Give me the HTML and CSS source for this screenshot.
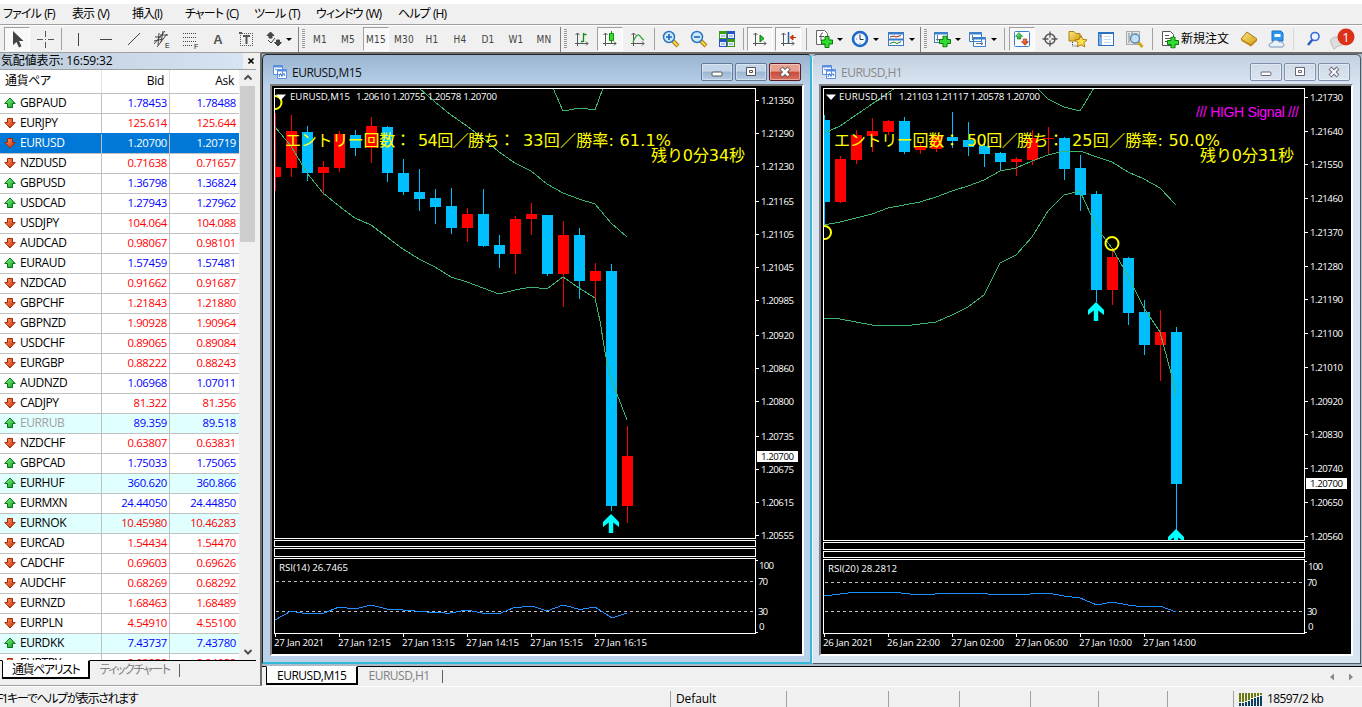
FILE: index.html
```html
<!DOCTYPE html>
<html lang="ja">
<head>
    <meta charset="UTF-8">
    <meta name="viewport" content="width=device-width, initial-scale=1.0">
    <title>EURUSD,M15</title>
    <link rel="stylesheet" href="styles.css">
</head>
<body>
    <!-- shared shapes -->
    <svg class="defs" width="0" height="0">
        <defs>
            <linearGradient id="g-up" x1="0" y1="0" x2="1" y2="1"><stop offset="0" stop-color="#8f8"/><stop offset="1" stop-color="#0a9a1a"/></linearGradient>
            <linearGradient id="g-down" x1="0" y1="0" x2="1" y2="1"><stop offset="0" stop-color="#ff9a6a"/><stop offset="1" stop-color="#c62800"/></linearGradient>
            <linearGradient id="g-gold" x1="0" y1="0" x2="1" y2="1"><stop offset="0" stop-color="#ffe680"/><stop offset="1" stop-color="#d09a10"/></linearGradient>
            <symbol id="up" viewBox="0 0 12 12"><path d="M6 1L11.200 6.500H8.500V10.500H3.500V6.500H.8Z" fill="url(#g-up)" stroke="#087018"/></symbol>
            <symbol id="down" viewBox="0 0 12 12"><path d="M6 11L11.200 5.500H8.500V1.500H3.500V5.500H.8Z" fill="url(#g-down)" stroke="#a02808"/></symbol>
            <symbol id="plus" viewBox="0 0 12 12"><path d="M4 .5H8V4H11.5V8H8V11.5H4V8H.5V4H4Z" fill="#2fdc2f" stroke="#087808"/></symbol>
            <symbol id="axes" viewBox="0 0 16 16"><path d="M3.500 2V15M1 12.500H14M1.500 4L3.500 2L5.500 4M12 10.500L14 12.500L12 14.500" fill="none" stroke="#555"/></symbol>
            <symbol id="child" viewBox="0 0 14 14"><path d="M.5 .5H9.500V9.500H.5ZM4.500 4.500H13.500V13.500H4.500Z" fill="#fff" stroke="#5b8de0"/><path d="M.5 1.500H9.500M4.500 5.500H13.500" stroke="#5b8de0" stroke-width="2"/><path d="M2 4L4 5M6 12L7.500 8.500L9 11.500L11 8.500L12 11" fill="none" stroke="#4b7fd8"/></symbol>
            <symbol id="arrow" viewBox="0 0 16 19"><path d="M8 0L16 8V13L10.200 8.500V19H5.800V8.500L0 13V8Z" fill="#0ff"/></symbol>
        </defs>
    </svg>

    <div class="app">
        <nav class="menu">
            <span>ファイル (F)</span>
            <span>表示 (V)</span>
            <span>挿入(I)</span>
            <span>チャート (C)</span>
            <span>ツール (T)</span>
            <span>ウィンドウ (W)</span>
            <span>ヘルプ (H)</span>
        </nav>

        <div class="toolbar">
            <div class="edge"></div>
            <div class="tool on"><svg width="16" height="20"><path d="M4 2V16L7.500 13L10 18.500L12.500 17.300L10 12H14.500Z" fill="#444"/></svg></div>
            <div class="tool"><svg width="18" height="18"><path d="M9.500 1V7M9.500 12V18M1 9.500H7M12 9.500H18M9.500 9V10" stroke="#555"/></svg></div>
            <div class="sep"></div>
            <div class="tool"><svg width="18" height="18"><path d="M9.500 3V16" stroke="#444"/></svg></div>
            <div class="tool"><svg width="18" height="18"><path d="M3 9.500H15" stroke="#444"/></svg></div>
            <div class="tool"><svg width="18" height="18"><path d="M3 15L15 3" stroke="#444"/></svg></div>
            <div class="tool"><svg width="18" height="20"><path d="M1 15L12 2M4 18L14 5M2 8L8 8M1 12L10 10M6 4L5 16M10 2L8 13M7 6H15" stroke="#444" fill="none"/><text x="12" y="19" class="tiny">E</text></svg></div>
            <div class="tool"><svg width="19" height="20"><path d="M2 4.500H16M2 8.500H16M2 12.500H16M2 16.500H11" stroke="#444" stroke-dasharray="1 1" shape-rendering="crispEdges"/><text x="13" y="20" class="tiny">F</text></svg></div>
            <div class="tool"><b>A</b></div>
            <div class="tool"><svg width="16" height="18"><path d="M2 3.500H15M2 15.500H15M2.500 3V16M14.500 3V16" stroke="#555" stroke-dasharray="1 1" shape-rendering="crispEdges"/><path d="M1 2H4V4H1Z" fill="#555"/><path d="M5 6H12M8.500 5.500V14" stroke="#555" stroke-width="2"/></svg></div>
            <div class="tool"><svg width="18" height="18"><path d="M5.500 2L9 5.500L7 5.500V8H4V5.500L2 5.500ZM13 16L9.500 12.500L11.500 12.500V10H14.500V12.500H16.500Z" fill="#444" stroke="#444"/><path d="M3 10L6 13L10 8" fill="none" stroke="#444"/></svg></div>
            <i class="caret first"></i>

            <div class="grip"></div>
            <div class="tool tf">M1</div>
            <div class="tool tf">M5</div>
            <div class="tool tf on">M15</div>
            <div class="tool tf">M30</div>
            <div class="tool tf">H1</div>
            <div class="tool tf">H4</div>
            <div class="tool tf">D1</div>
            <div class="tool tf">W1</div>
            <div class="tool tf">MN</div>

            <div class="grip"></div>
            <div class="tool"><svg width="16" height="16"><use href="#axes"/><path d="M9.500 2V11M7 10.500H9M10 3.500H12.500" stroke="#149014" stroke-width="1.300"/></svg></div>
            <div class="tool on"><svg width="16" height="16"><use href="#axes"/><path d="M9.500 0V12" stroke="#149014"/><path d="M7.500 2.500H11.500V9.500H7.500Z" fill="#3d3" stroke="#149014"/></svg></div>
            <div class="tool"><svg width="16" height="16"><use href="#axes"/><path d="M3 11Q7 1 10 5T14 9" fill="none" stroke="#38a838" stroke-width="1.300"/></svg></div>
            <div class="sep"></div>
            <div class="tool"><svg width="18" height="18"><path d="M11 11L16 16" stroke="#a87a10" stroke-width="4"/><path d="M11 11L15.500 15.500" stroke="#ffd84a" stroke-width="2"/><circle cx="7" cy="7" r="5.500" fill="#cfe8fb" stroke="#2a78c0" stroke-width="1.500"/><path d="M4 7H10M7 4V10" stroke="#1a68b8" stroke-width="1.600"/></svg></div>
            <div class="tool"><svg width="18" height="18"><path d="M11 11L16 16" stroke="#a87a10" stroke-width="4"/><path d="M11 11L15.500 15.500" stroke="#ffd84a" stroke-width="2"/><circle cx="7" cy="7" r="5.500" fill="#cfe8fb" stroke="#2a78c0" stroke-width="1.500"/><path d="M4 7H10" stroke="#1a68b8" stroke-width="1.600"/></svg></div>
            <div class="tool"><svg width="16" height="16"><path d="M0 0H8V8H0ZM8 8H16V16H8Z" fill="#3a9a10"/><path d="M8 0H16V8H8ZM0 8H8V16H0Z" fill="#2850c8"/><path d="M1 3H7V7H1ZM9 3H15V7H9ZM1 11H7V15H1ZM9 11H15V15H9Z" fill="#e8f0ff"/><path d="M2 5H6M10 5H14M2 13H6M10 13H14" stroke="#7a9ac0"/></svg></div>
            <div class="sep"></div>
            <div class="tool on"><svg width="16" height="16"><use href="#axes"/><path d="M8 4L12 7.500L8 11Z" fill="#2c2" stroke="#087808"/></svg></div>
            <div class="tool on"><svg width="16" height="16"><use href="#axes"/><path d="M8.500 1V12" stroke="#2060a0" stroke-width="1.500"/><path d="M10 6.500L13 4V9ZM12 6.500H16" fill="#e04010" stroke="#c03000"/></svg></div>
            <div class="sep wide"></div>
            <div class="tool drop"><svg width="18" height="18"><path d="M1.500 .5H9.500L12.500 3.500V14.500H1.500Z" fill="#fff" stroke="#666"/><path d="M8 3C5 3 6 6 6 11M4 6.500H9" fill="none" stroke="#555"/><use href="#plus" x="6" y="6" width="12" height="12"/></svg><i class="caret"></i></div>
            <div class="tool drop"><svg width="18" height="18"><circle cx="9" cy="9" r="7" fill="#eef6ff" stroke="#1d68c8" stroke-width="2.600"/><path d="M9 4.500V9.500H12.500" fill="none" stroke="#333"/><path d="M5 9H6M9 13V14" stroke="#789"/></svg><i class="caret"></i></div>
            <div class="tool drop"><svg width="18" height="16"><rect x="1.500" y="1.500" width="15" height="13" fill="#fff" stroke="#3a7ac8"/><path d="M1 2.500H17M1 8.500H17" stroke="#3a7ac8" stroke-width="2"/><path d="M3 6L7 5L9 6L14 4.500" fill="none" stroke="#a02010"/><path d="M3 12.500L7 11L10 12.500L14 10.500" fill="none" stroke="#188018"/></svg><i class="caret"></i></div>

            <div class="grip"></div>
            <div class="tool drop"><svg width="18" height="17"><rect x="1.500" y="1.500" width="13" height="10" fill="#fff" stroke="#3a80c8"/><path d="M1 2.500H15" stroke="#3a80c8" stroke-width="2"/><path d="M4.500 4V10M3 8.500H9" stroke="#678"/><use href="#plus" x="6" y="4.500" width="12" height="12"/></svg><i class="caret"></i></div>
            <div class="tool drop"><svg width="18" height="17"><path d="M.5 1.500H12.500V10.500H.5ZM4.500 6.500H16.500V15.500H4.500Z" fill="#fff" stroke="#3a80c8"/><path d="M0 2.500H13M4 7.500H17" stroke="#3a80c8" stroke-width="2"/><path d="M3.500 4V9M7 12.500H14M12 11L14 12.500L12 14" fill="none" stroke="#678"/></svg><i class="caret"></i></div>
            <div class="sep wide"></div>
            <div class="tool on"><svg width="16" height="16"><rect x=".5" y=".5" width="15" height="15" rx="1" fill="#fff" stroke="#3a80d0"/><use href="#up" x="1" y="1" width="8" height="8"/><use href="#down" x="7" y="7" width="8" height="8"/></svg></div>
            <div class="tool"><svg width="18" height="18"><circle cx="9" cy="9" r="5" fill="none" stroke="#555" stroke-width="1.500"/><path d="M9 1.500V7.500M9 10.500V16.500M1.500 9H7.500M10.500 9H16.500" stroke="#555" stroke-width="1.300"/></svg></div>
            <div class="tool"><svg width="20" height="18"><path d="M1 1.500H6L8 3.500H12V11H1Z" fill="url(#g-gold)" stroke="#a88410"/><path d="M4.500 12V16H10" fill="none" stroke="#444" stroke-dasharray="1 1"/><path d="M13 5.500L14.800 9.400L19 9.900L15.900 12.700L16.700 16.900L13 14.800L9.300 16.900L10.100 12.700L7 9.900L11.200 9.400Z" fill="#ffe24a" stroke="#b07a10"/></svg></div>
            <div class="tool"><svg width="16" height="16"><rect x=".5" y="1.500" width="15" height="13" fill="#fff" stroke="#2a72c0"/><path d="M0 2H16" stroke="#2a72c0" stroke-width="2"/><path d="M1 3H4V14H1Z" fill="#7ab0e8"/><path d="M6 5.500H13M6 8.500H13M6 11.500H13" stroke="#c8d8f0"/><path d="M2 5H3" stroke="#d00"/></svg></div>
            <div class="tool"><svg width="19" height="18"><rect x="1.500" y="1.500" width="13" height="13" fill="#e8e8e0" stroke="#aaa"/><path d="M4 3V13M7 2V10M11 3V9" stroke="#789"/><path d="M13 12L17.500 17" stroke="#d8a818" stroke-width="3"/><circle cx="10" cy="8.500" r="4.500" fill="#bfe0f8" fill-opacity=".8" stroke="#5088b8" stroke-width="1.300"/></svg></div>
            <div class="sep wide"></div>
            <div class="tool order"><svg width="18" height="19"><path d="M1.500 1.500H9.500L12.500 4.500V15.500H1.500Z" fill="#fff" stroke="#555"/><path d="M4 5.500H8M4 8.500H10M4 11.500H8" stroke="#555"/><use href="#plus" x="6" y="6.500" width="12" height="12"/></svg><span>新規注文</span></div>
            <div class="tool"><svg width="18" height="16"><path d="M1 8L7 1L17 8L11 15Z" fill="url(#g-gold)" stroke="#a87818"/><path d="M1 8L1.500 10L11 15.500L17 10V8L11 13Z" fill="#c08a18"/></svg></div>
            <div class="tool"><svg width="18" height="18"><path d="M4 1H13L15 3V11H4Z" fill="#2a98f0" stroke="#1a70c8"/><path d="M6.500 4H12.500V7H6.500Z" fill="#fff"/><path d="M3 17C0 17 .5 12.500 4 13C5 9.500 10 9.500 11 12C15 10.500 18 16.500 14 17Z" fill="#e8f0fa" stroke="#7a90b8"/></svg></div>
            <div class="sep faint"></div>
            <div class="tool"><svg width="16" height="16"><path d="M2 14L6.500 8.500" stroke="#2a5ac0" stroke-width="2.500"/><circle cx="9" cy="5.500" r="4" fill="#eef4ff" stroke="#3a68d8" stroke-width="1.600"/></svg></div>
            <div class="tool bubble"><svg width="26" height="22"><path d="M3 17C-1 12 4 8 10 9C17 10 16 18 9 18L5 21Z" fill="#ddd" stroke="#bbb"/><circle cx="17" cy="9" r="8.500" fill="#dc3018"/><text x="17" y="13.500">1</text></svg></div>
        </div>

        <div class="main">
            <aside class="watch">
                <div class="watch-title"><span>気配値表示: 16:59:32</span><svg width="8" height="8"><path d="M1.500 1.500L6.500 6.500M6.500 1.500L1.500 6.500" stroke="#000" stroke-width="1.700"/></svg></div>
                <div class="watch-body">
                    <div class="list">
                        <div class="row head"><span>通貨ペア</span><span>Bid</span><span>Ask</span></div>
                        <div class="row rise"><span><svg><use href="#up"/></svg>GBPAUD</span><span>1.78453</span><span>1.78488</span></div>
                        <div class="row"><span><svg><use href="#down"/></svg>EURJPY</span><span>125.614</span><span>125.644</span></div>
                        <div class="row selected"><span><svg><use href="#down"/></svg>EURUSD</span><span>1.20700</span><span>1.20719</span></div>
                        <div class="row"><span><svg><use href="#down"/></svg>NZDUSD</span><span>0.71638</span><span>0.71657</span></div>
                        <div class="row rise"><span><svg><use href="#up"/></svg>GBPUSD</span><span>1.36798</span><span>1.36824</span></div>
                        <div class="row rise"><span><svg><use href="#up"/></svg>USDCAD</span><span>1.27943</span><span>1.27962</span></div>
                        <div class="row"><span><svg><use href="#down"/></svg>USDJPY</span><span>104.064</span><span>104.088</span></div>
                        <div class="row"><span><svg><use href="#down"/></svg>AUDCAD</span><span>0.98067</span><span>0.98101</span></div>
                        <div class="row rise"><span><svg><use href="#up"/></svg>EURAUD</span><span>1.57459</span><span>1.57481</span></div>
                        <div class="row"><span><svg><use href="#down"/></svg>NZDCAD</span><span>0.91662</span><span>0.91687</span></div>
                        <div class="row"><span><svg><use href="#down"/></svg>GBPCHF</span><span>1.21843</span><span>1.21880</span></div>
                        <div class="row"><span><svg><use href="#down"/></svg>GBPNZD</span><span>1.90928</span><span>1.90964</span></div>
                        <div class="row"><span><svg><use href="#down"/></svg>USDCHF</span><span>0.89065</span><span>0.89084</span></div>
                        <div class="row"><span><svg><use href="#down"/></svg>EURGBP</span><span>0.88222</span><span>0.88243</span></div>
                        <div class="row rise"><span><svg><use href="#up"/></svg>AUDNZD</span><span>1.06968</span><span>1.07011</span></div>
                        <div class="row"><span><svg><use href="#down"/></svg>CADJPY</span><span>81.322</span><span>81.356</span></div>
                        <div class="row rise tint off"><span><svg><use href="#up"/></svg>EURRUB</span><span>89.359</span><span>89.518</span></div>
                        <div class="row"><span><svg><use href="#down"/></svg>NZDCHF</span><span>0.63807</span><span>0.63831</span></div>
                        <div class="row rise"><span><svg><use href="#up"/></svg>GBPCAD</span><span>1.75033</span><span>1.75065</span></div>
                        <div class="row rise tint"><span><svg><use href="#up"/></svg>EURHUF</span><span>360.620</span><span>360.866</span></div>
                        <div class="row rise"><span><svg><use href="#up"/></svg>EURMXN</span><span>24.44050</span><span>24.44850</span></div>
                        <div class="row tint"><span><svg><use href="#down"/></svg>EURNOK</span><span>10.45980</span><span>10.46283</span></div>
                        <div class="row"><span><svg><use href="#down"/></svg>EURCAD</span><span>1.54434</span><span>1.54470</span></div>
                        <div class="row"><span><svg><use href="#down"/></svg>CADCHF</span><span>0.69603</span><span>0.69626</span></div>
                        <div class="row"><span><svg><use href="#down"/></svg>AUDCHF</span><span>0.68269</span><span>0.68292</span></div>
                        <div class="row"><span><svg><use href="#down"/></svg>EURNZD</span><span>1.68463</span><span>1.68489</span></div>
                        <div class="row"><span><svg><use href="#down"/></svg>EURPLN</span><span>4.54910</span><span>4.55100</span></div>
                        <div class="row rise tint"><span><svg><use href="#up"/></svg>EURDKK</span><span>7.43737</span><span>7.43780</span></div>
                        <div class="row"><span><svg><use href="#down"/></svg>EURTRY</span><span>8.93258</span><span>8.94058</span></div>
                    </div>
                    <div class="scroll">
                        <svg width="16" height="16"><path d="M4.500 9.500L8 6L11.500 9.500" fill="none" stroke="#505050" stroke-width="2"/></svg>
                        <div class="thumb"></div>
                        <svg width="16" height="16"><path d="M4.500 6L8 9.500L11.500 6" fill="none" stroke="#505050" stroke-width="2"/></svg>
                    </div>
                </div>
                <div class="tabs small">
                    <span class="tab active">通貨ペアリスト</span>
                    <span class="tab">ティックチャート</span>
                </div>
            </aside>

            <section class="work">
                <div class="windows">
                    <article class="window active">
                        <header>
                            <svg width="14" height="14"><use href="#child"/></svg>
                            <h2>EURUSD,M15</h2>
                            <button><svg width="12" height="12"><rect x="1" y="6" width="10" height="4" rx="1" fill="#fff" stroke="#555"/></svg></button>
                            <button><svg width="12" height="12"><path d="M1.500 1.500H10.500V9.500H1.500ZM4.500 4.500H7.500V6.500H4.500Z" fill="#fff" stroke="#555"/></svg></button>
                            <button class="close"><svg width="12" height="12"><path d="M2 2L10 10M10 2L2 10" stroke="#555" stroke-width="4.500"/><path d="M2.500 2.500L9.500 9.500M9.500 2.500L2.500 9.500" stroke="#fff" stroke-width="2.600"/></svg></button>
                        </header>
                        <svg class="chart" viewBox="272 86 530 568">
                            <defs><clipPath id="plot1"><rect x="275" y="89" width="480" height="449"/></clipPath></defs>
                            <g class="frame">
                                <path d="M274.500 88.500H755.500V538.500H274.500ZM274.500 540.500H755.500V546.500H274.500ZM274.500 548.500H755.500V556.500H274.500ZM274.500 558.500H755.500V633.500H274.500Z"/>
                                <path d="M756 100.500h3M756 133.500h3M756 166.500h3M756 201.500h3M756 234.500h3M756 267.500h3M756 300.500h3M756 335.500h3M756 368.500h3M756 401.500h3M756 436.500h3M756 469.500h3M756 502.500h3M756 535.500h3M756 560.500h2M756 632.500h2"/>
                                <path d="M275.500 634v3M339.500 634v3M403.500 634v3M467.500 634v3M531.500 634v3M595.500 634v3"/>
                            </g>
                            <g clip-path="url(#plot1)">
                                <path class="wick bull" d="M275.500 113V191M291.500 115V177M323.500 161V195M339.500 131V172M371.500 117V163M467.500 208V242M515.500 216V274M531.500 203V235M563.500 221V307M595.500 263V302M627.500 426V523"/>
                                <path class="body bull" d="M275.500 167V177M291.500 131V168M323.500 167V173M339.500 134V168M371.500 126V148M467.500 214V228M515.500 219V254M531.500 214V219M563.500 235V274M595.500 271V281M627.500 456V506"/>
                                <path class="wick bear" d="M307.500 126V181M355.500 130V156M387.500 126V182M403.500 159V195M419.500 169V211M435.500 189V224M451.500 188V234M483.500 189V247M499.500 235V268M547.500 215V276M579.500 228V299M611.500 264V511"/>
                                <path class="body bear" d="M307.500 132V173M355.500 135V148M387.500 127V173M403.500 173V192M419.500 192V199M435.500 198V207M451.500 206V228M483.500 214V246M499.500 245V254M547.500 215V274M579.500 235V281M611.500 271V506"/>
                                <polyline class="band" points="419,88 435,102 451,115 467,126 483,138 499,152 515,163 531,171 547,184 563,193 579,199 595,204 611,223 627,237"/>
                                <polyline class="band" points="553,88 563,111 580,108 595,110 603,88"/>
                                <polyline class="band" points="275,127 291,146 307,173 323,193 339,206 355,218 371,225 387,237 403,249 419,259 435,267 451,277 467,282 483,288 499,294 515,290 531,287 547,289 563,277 579,288 595,298 600,321 605,352 611,379 617,394 627,420"/>
                                <circle class="mark" cx="275" cy="102.500" r="6.500"/>
                                <use href="#arrow" x="603" y="514" width="16" height="19"/>
                            </g>
                            <path class="level" d="M276 581.500H755M276 611.500H755"/>
                            <polyline class="rsi" points="275,620 291,611 307,614 324,613 339,607 355,609 371,605 387,609 403,610 427,612 445,613 450,613 467,610 482,613 501,613 513,608 532,606 547,611 563,605 580,609.500 595,607 612,618 627,613"/>
                            <path d="M276 94.500H286L281 100Z" fill="#fff"/>
                            <g class="label">
                                <text x="290" y="100" textLength="60">EURUSD,M15</text>
                                <text x="356" y="100" textLength="141">1.20610 1.20755 1.20578 1.20700</text>
                                <text x="279" y="571" textLength="69">RSI(14) 26.7465</text>
                                <text x="761" y="104" textLength="33">1.21350</text>
                                <text x="761" y="137" textLength="33">1.21290</text>
                                <text x="761" y="170" textLength="33">1.21230</text>
                                <text x="761" y="205" textLength="33">1.21165</text>
                                <text x="761" y="238" textLength="33">1.21105</text>
                                <text x="761" y="271" textLength="33">1.21045</text>
                                <text x="761" y="304" textLength="33">1.20985</text>
                                <text x="761" y="339" textLength="33">1.20920</text>
                                <text x="761" y="372" textLength="33">1.20860</text>
                                <text x="761" y="405" textLength="33">1.20800</text>
                                <text x="761" y="440" textLength="33">1.20735</text>
                                <text x="761" y="473" textLength="33">1.20675</text>
                                <text x="761" y="506" textLength="33">1.20615</text>
                                <text x="761" y="539" textLength="33">1.20555</text>
                                <rect x="757" y="451" width="41" height="11"/>
                                <text class="price" x="761" y="460" textLength="33">1.20700</text>
                                <text x="759" y="569" textLength="15">100</text>
                                <text x="758" y="585" textLength="10">70</text>
                                <text x="758" y="615" textLength="10">30</text>
                                <text x="759" y="630">0</text>
                                <text x="274" y="646" textLength="50">27 Jan 2021</text>
                                <text x="338" y="646" textLength="53">27 Jan 12:15</text>
                                <text x="402" y="646" textLength="53">27 Jan 13:15</text>
                                <text x="466" y="646" textLength="53">27 Jan 14:15</text>
                                <text x="530" y="646" textLength="53">27 Jan 15:15</text>
                                <text x="594" y="646" textLength="53">27 Jan 16:15</text>
                            </g>
                            <g class="stats">
                                <text x="285" y="146" textLength="126">エントリー回数：</text>
                                <text x="418" y="146" textLength="97">54回／勝ち：</text>
                                <text x="523" y="146" textLength="148">33回／勝率: 61.1%</text>
                                <text x="651" y="161" textLength="94">残り0分34秒</text>
                            </g>
                        </svg>
                    </article>

                    <article class="window">
                        <header>
                            <svg width="14" height="14"><use href="#child"/></svg>
                            <h2>EURUSD,H1</h2>
                            <button><svg width="12" height="12"><rect x="1" y="6" width="10" height="3.500" rx="1" fill="#fff" stroke="#667"/></svg></button>
                            <button><svg width="12" height="12"><path d="M1.500 1.500H10.500V9.500H1.500ZM4.500 4.500H7.500V6.500H4.500Z" fill="#fff" stroke="#667"/></svg></button>
                            <button><svg width="12" height="12"><path d="M2 2L10 10M10 2L2 10" stroke="#667" stroke-width="4"/><path d="M2.500 2.500L9.500 9.500M9.500 2.500L2.500 9.500" stroke="#fff" stroke-width="2"/></svg></button>
                        </header>
                        <svg class="chart" viewBox="821 86 530 568">
                            <defs><clipPath id="plot2"><rect x="824" y="89" width="480" height="451"/></clipPath></defs>
                            <g class="frame">
                                <path d="M823.500 88.500H1304.500V540.500H823.500ZM823.500 542.500H1304.500V549.500H823.500ZM823.500 551.500H1304.500V557.500H823.500ZM823.500 559.500H1304.500V633.500H823.500Z"/>
                                <path d="M1305 97.500h3M1305 131.500h3M1305 164.500h3M1305 198.500h3M1305 232.500h3M1305 266.500h3M1305 299.500h3M1305 333.500h3M1305 367.500h3M1305 401.500h3M1305 434.500h3M1305 468.500h3M1305 502.500h3M1305 536.500h3M1305 561.500h2M1305 632.500h2"/>
                                <path d="M824.500 634v3M888.500 634v3M952.500 634v3M1016.500 634v3M1080.500 634v3M1144.500 634v3"/>
                            </g>
                            <g clip-path="url(#plot2)">
                                <path class="wick bull" d="M840.500 156V203M856.500 130V164M872.500 118V152M888.500 120V135M920.500 142V154M936.500 135V152M1016.500 157V176M1032.500 130V165M1048.500 127V155M1112.500 250V305M1160.500 310V381"/>
                                <path class="body bull" d="M840.500 159V202M856.500 135V160M872.500 131V136M888.500 121V132M920.500 147V150M936.500 136V149M1016.500 159V162M1032.500 138V160M1048.500 138V139M1112.500 257V290M1160.500 332V345"/>
                                <path class="wick bear" d="M824.500 115V225M904.500 117V154M952.500 112V148M968.500 122V156M984.500 141V167M1000.500 152V170M1064.500 137V180M1080.500 155V211M1096.500 191V302M1128.500 257V325M1144.500 300V355M1176.500 327V530"/>
                                <path class="body bear" d="M824.500 120V202M904.500 121V152M952.500 137V141M968.500 140V147M984.500 146V154M1000.500 153V162M1064.500 138V169M1080.500 168V195M1096.500 194V290M1128.500 258V313M1144.500 312V345M1176.500 332V484"/>
                                <polyline class="band" points="824,133 840,126 856,115 878,100 895,88"/>
                                <polyline class="band" points="1037,88 1048,99 1064,107 1080,111 1094,88"/>
                                <polyline class="band" points="824,225 840,222 856,218 872,214 888,208 920,202 936,197 952,191 968,186 984,180 1000,171 1016,168 1032,161 1048,155 1064,151 1080,151 1097,157 1112,162 1128,172 1144,179 1160,188 1176,205"/>
                                <polyline class="band" points="824,318 840,319 872,325 912,325 936,322 952,315 968,307 984,295 1000,263 1016,255 1032,237 1048,211 1064,195 1080,191 1097,228 1112,248 1128,276 1144,308 1160,332 1171,373 1176,395"/>
                                <circle class="mark" cx="824.500" cy="232.500" r="6.500"/>
                                <circle class="mark" cx="1112" cy="243.500" r="6.500"/>
                                <use href="#arrow" x="1088" y="302" width="16" height="19"/>
                                <use href="#arrow" x="1168" y="529" width="16" height="19"/>
                            </g>
                            <path class="level" d="M825 582.500H1304M825 611.500H1304"/>
                            <polyline class="rsi" points="824,596 848,593 864,592 892,592 910,594 935,594 965,593 1010,595 1030,594 1048,593 1064,596 1080,598 1097,605 1112,602 1128,605 1144,607 1160,606 1176,612"/>
                            <path d="M826 94.500H836L831 100Z" fill="#fff"/>
                            <g class="label">
                                <text x="839" y="100" textLength="54">EURUSD,H1</text>
                                <text x="899" y="100" textLength="141">1.21103 1.21117 1.20578 1.20700</text>
                                <text x="828" y="572" textLength="69">RSI(20) 28.2812</text>
                                <text x="1310" y="101" textLength="33">1.21730</text>
                                <text x="1310" y="135" textLength="33">1.21640</text>
                                <text x="1310" y="168" textLength="33">1.21550</text>
                                <text x="1310" y="202" textLength="33">1.21460</text>
                                <text x="1310" y="236" textLength="33">1.21370</text>
                                <text x="1310" y="270" textLength="33">1.21280</text>
                                <text x="1310" y="303" textLength="33">1.21190</text>
                                <text x="1310" y="337" textLength="33">1.21100</text>
                                <text x="1310" y="371" textLength="33">1.21010</text>
                                <text x="1310" y="405" textLength="33">1.20920</text>
                                <text x="1310" y="438" textLength="33">1.20830</text>
                                <text x="1310" y="472" textLength="33">1.20740</text>
                                <text x="1310" y="506" textLength="33">1.20650</text>
                                <text x="1310" y="540" textLength="33">1.20560</text>
                                <rect x="1306" y="478" width="41" height="11"/>
                                <text class="price" x="1310" y="487" textLength="33">1.20700</text>
                                <text x="1308" y="570" textLength="15">100</text>
                                <text x="1307" y="586" textLength="10">70</text>
                                <text x="1307" y="615" textLength="10">30</text>
                                <text x="1308" y="630">0</text>
                                <text x="823" y="646" textLength="50">26 Jan 2021</text>
                                <text x="887" y="646" textLength="53">26 Jan 22:00</text>
                                <text x="951" y="646" textLength="53">27 Jan 02:00</text>
                                <text x="1015" y="646" textLength="53">27 Jan 06:00</text>
                                <text x="1079" y="646" textLength="53">27 Jan 10:00</text>
                                <text x="1143" y="646" textLength="53">27 Jan 14:00</text>
                            </g>
                            <g class="stats">
                                <text x="834" y="146" textLength="126">エントリー回数：</text>
                                <text x="967" y="146" textLength="97">50回／勝ち：</text>
                                <text x="1072" y="146" textLength="148">25回／勝率: 50.0%</text>
                                <text x="1200" y="161" textLength="94">残り0分31秒</text>
                            </g>
                            <text class="signal" x="1196" y="117" textLength="103">/// HIGH Signal ///</text>
                        </svg>
                    </article>
                </div>
                <div class="tabs">
                    <span class="tab active">EURUSD,M15</span>
                    <span class="tab">EURUSD,H1</span>
                    <svg class="pager" width="30" height="10"><path d="M7 1.500V8.500L3 5ZM22 1.500V8.500L26 5Z" fill="#888"/></svg>
                </div>
            </section>
        </div>

        <footer class="status">
            <span class="hint">F1キーでヘルプが表示されます</span>
            <span>Default</span>
            <span></span>
            <span></span>
            <span></span>
            <span></span>
            <span></span>
            <span></span>
            <span class="net"><svg width="23" height="13"><path d="M1 0V9M4 0V9M7 0V8M10 0V7M13 0V5M16 0V4M19 0V3M22 0V2" stroke="#6b7a10" stroke-width="2"/><path d="M1 10V13M4 10V13M7 9V13M10 8V13M13 6V13M16 5V13M19 4V13M22 3V13" stroke="#0c3f5c" stroke-width="2"/></svg>18597/2 kb</span>
        </footer>
    </div>
</body>
</html>
```
FILE: styles.css
```css
* {
    margin: 0;
    padding: 0;
    box-sizing: border-box;
}

body {
    width: 1362px;
    height: 707px;
    overflow: hidden;
    background: #f0f0f0;
    font-family: "Open Sans", "Noto Sans CJK JP", sans-serif;
    font-size: 12px;
    color: #000;
}

svg {
    display: block;
    flex: none;
}

.defs {
    position: absolute;
}

.app {
    display: flex;
    flex-direction: column;
    height: 707px;
}

/* menu */
.menu {
    display: grid;
    grid-template-columns: 69px 60px 53px 69px 62px 82px 60px;
    height: 25px;
    padding-left: 3px;
    border-top: 4px solid #fff;
    border-bottom: 1px solid #a0a0a0;
    line-height: 19px;
    white-space: nowrap;
    font-feature-settings: "palt";
    letter-spacing: -0.9px;
    word-spacing: 1px;
}

/* toolbar */
.toolbar {
    display: flex;
    align-items: center;
    height: 27px;
    border-top: 1px solid #fff;
}

.edge {
    width: 3px;
}

.tool {
    display: flex;
    align-items: center;
    justify-content: center;
    flex: none;
    width: 28px;
    height: 24px;
    color: #555;
    font-family: "Liberation Sans", sans-serif;
    font-size: 13px;
}

.tool.on {
    width: 26px;
    margin: 0 1px;
    background: #f8f8f8;
    border: 1px solid #a0a0a0;
    border-right-color: #fff;
    border-bottom-color: #fff;
}

.tool.tf {
    color: #444;
    font-family: "DejaVu Sans Condensed", "DejaVu Sans", sans-serif;
    font-size: 10px;
    letter-spacing: 0.2px;
}

.tool .tiny {
    font-size: 7px;
    fill: #222;
}

.tool.drop {
    width: 36px;
    justify-content: flex-start;
    padding-left: 5px;
    gap: 4px;
}

.tool.order {
    width: 79px;
    justify-content: flex-start;
    padding-left: 5px;
    gap: 2px;
    color: #000;
    font-family: "Noto Sans CJK JP", sans-serif;
    font-size: 12px;
    line-height: 18px;
    white-space: nowrap;
}

.tool.order span {
    margin-top: -3px;
}

.tool.bubble text {
    font-family: "Open Sans", sans-serif;
    font-size: 13px;
    fill: #fff;
    text-anchor: middle;
}

.caret {
    flex: none;
    width: 0;
    border: 3px solid transparent;
    border-top-color: #000;
    border-bottom: 0;
}

.caret.first {
    margin: 0 4px 0 -2px;
}

.sep {
    flex: none;
    width: 5px;
    height: 22px;
    background: linear-gradient(#a0a0a0, #a0a0a0) 2px 0 / 1px 100% no-repeat;
}

.sep.wide {
    width: 8px;
    background-position: 4px 0;
}

.sep.faint {
    width: 9px;
    opacity: 0.3;
}

.grip {
    flex: none;
    width: 10px;
    height: 25px;
    background:
        linear-gradient(#808080, #808080) 2px 0 / 1px 100% no-repeat,
        repeating-linear-gradient(#999 0 1px, #f0f0f0 1px 2px) 6px 2px / 3px 20px no-repeat;
}

/* main area */
.main {
    display: flex;
    height: 634px;
}

.watch {
    display: flex;
    flex-direction: column;
    width: 262px;
    border-top: 1px solid #a0a0a0;
    border-right: 2px solid #6e6e6e;
    border-bottom: 1px solid #a0a0a0;
}

.watch-title {
    display: flex;
    align-items: center;
    justify-content: space-between;
    width: 258px;
    height: 16px;
    padding: 0 3px 0 1px;
    background: linear-gradient(90deg, #bccbdb, #d7e4f2 243px, #f0f0f0 243px);
    font-size: 12px;
    line-height: 15px;
    white-space: nowrap;
    letter-spacing: -0.15px;
}

.watch-title span {
    margin-top: -2px;
}

.watch-body {
    display: flex;
    width: 256px;
    height: 591px;
    border-top: 1px solid #a0a0a0;
}

.list {
    width: 239px;
    overflow: hidden;
    background: #fff;
}

.row {
    display: grid;
    grid-template-columns: 102px 68px 69px;
    height: 20px;
    border-bottom: 1px solid #c0c0c0;
    color: #f00;
    line-height: 17px;
}

.row span {
    padding-right: 2px;
    border-right: 1px solid #c0c0c0;
    text-align: right;
    font-size: 11.3px;
    letter-spacing: -0.3px;
}

.row span:last-child {
    padding-right: 3px;
    border-right: 0;
}

.row span:first-child {
    display: flex;
    gap: 4px;
    padding-left: 4px;
    color: #000;
    font-size: 12px;
    letter-spacing: -0.4px;
}

.row svg {
    width: 12px;
    height: 12px;
    margin-top: 3px;
}

.row.rise {
    color: #00f;
}

.row.tint {
    background: #e0ffff;
}

.row.off span:first-child {
    color: #a0a0a0;
}

.row.selected,
.row.selected span:first-child {
    background: #0078d7;
    color: #fff;
}

.row.selected {
    box-shadow: 0 -1px #0078d7;
}

.row.head {
    height: 24px;
    color: #000;
    line-height: 22px;
}

.row.head span {
    padding: 0 5px;
    border-color: #e0e0e0;
    font-size: 12px;
    font-feature-settings: "palt";
}

.scroll {
    display: flex;
    flex-direction: column;
    width: 17px;
    padding-left: 1px;
    background: #f0f0f0;
}

.thumb {
    width: 15px;
    height: 156px;
    margin-bottom: auto;
    background: #cdcdcd;
}

/* tabs */
.tabs {
    display: flex;
    align-items: flex-start;
    height: 22px;
    padding-left: 4px;
    border-top: 1px solid #000;
}

.tabs.small {
    width: 256px;
    height: 24px;
    padding-left: 2px;
    font-feature-settings: "palt";
}

.tab {
    height: 17px;
    padding: 0 10px;
    color: #808080;
    line-height: 17px;
    white-space: nowrap;
    letter-spacing: -0.5px;
}

.tab:not(.active) {
    height: 13px;
    margin-top: 3px;
    padding-right: 12px;
    border-right: 1px solid #606060;
    line-height: 11px;
}

.tab.active {
    height: 19px;
    margin-top: -1px;
    background: #fff;
    border: 1px solid #000;
    border-top-color: #fff;
    border-width: 1px 2px 2px 1px;
    color: #000;
}

.tabs.small .tab {
    padding: 0 9px;
    letter-spacing: -1.4px;
}

.pager {
    margin: 5px 5px 0 auto;
}

/* chart windows */
.work {
    width: 1100px;
    border-top: 2px solid #6e6e6e;
}

.windows {
    display: flex;
    height: 612px;
    background: #abc;
}

.window {
    width: 549px;
    height: 610px;
    padding: 0 7px 0 6px;
    background: linear-gradient(#c2d0df, #dbe6f3 32px, #d7e4f2);
    border: 1px solid #505860;
    border-left-color: #fff;
    border-radius: 5px 5px 0 0;
}

.window.active {
    width: 550px;
    padding: 0 7px;
    background: linear-gradient(#9ab4d1, #b9d1ea 32px, #b9d1ea);
    border: 1px solid #222;
    border-right: 2px solid #33b8d8;
    border-bottom: 2px solid #33b8d8;
}

.window header {
    display: flex;
    align-items: center;
    gap: 2px;
    height: 29px;
    padding: 5px 3px 0 3px;
}

.window.active header {
    padding-right: 2px;
}

.window h2 {
    margin: 0 auto 0 3px;
    color: #888;
    font-size: 12px;
    font-weight: 400;
    letter-spacing: -0.5px;
}

.window.active h2 {
    color: #111;
}

.window button {
    display: flex;
    align-items: center;
    justify-content: center;
    width: 32px;
    height: 18px;
    background: rgba(255, 255, 255, 0.12);
    border: 1px solid #7f8fab;
    border-radius: 2px;
    box-shadow: inset 0 0 0 1px rgba(255, 255, 255, 0.4);
}

.window.active button {
    background: linear-gradient(#c3d5e8 45%, #9cb6d2 50%, #b6cde6);
    border-color: #66799b;
}

.window.active button.close {
    background: linear-gradient(#e8a090 45%, #c84a38 50%, #d87060);
    border-color: #5a1a20;
}

.chart {
    width: 534px;
    height: 572px;
    background: #000;
    border: 2px solid #fff;
    border-top-color: #808080;
    border-left-color: #808080;
}

.frame path {
    fill: none;
    stroke: #fff;
    shape-rendering: crispEdges;
}

.wick,
.body {
    fill: none;
    shape-rendering: crispEdges;
}

.body {
    stroke-width: 11;
}

.bull {
    stroke: #f00;
}

.bear {
    stroke: #00bfff;
}

.band,
.rsi {
    fill: none;
    stroke: #3cb371;
    shape-rendering: crispEdges;
}

.rsi {
    stroke: #1e90ff;
}

.level {
    stroke: #c0c0c0;
    stroke-dasharray: 3 3;
    shape-rendering: crispEdges;
}

.mark {
    fill: none;
    stroke: #ff0;
    stroke-width: 2;
}

.label text {
    fill: #fff;
    font-family: "Open Sans", sans-serif;
    font-size: 9.7px;
}

.label rect {
    fill: #fff;
}

.label .price {
    fill: #000;
}

.stats text {
    fill: #ff0;
    font-family: "DejaVu Sans", "Noto Sans CJK JP", sans-serif;
    font-size: 16px;
}

.signal {
    fill: #f0f;
    font-family: "Liberation Sans", sans-serif;
    font-size: 14px;
}

/* status bar */
.status {
    display: grid;
    grid-template-columns: 670px 116px 102px 71px 71px 68px 69px 66px 129px;
    height: 21px;
    padding-top: 4px;
    border-top: 1px solid #fff;
    line-height: 16px;
    letter-spacing: -0.1px;
}

.status span {
    padding-left: 5px;
    border-left: 1px solid #a0a0a0;
}

.status .hint {
    padding: 0;
    border: 0;
    text-indent: -3px;
    font-feature-settings: "palt";
    letter-spacing: -1.4px;
}

.status .net {
    display: flex;
    align-items: center;
    gap: 5px;
    letter-spacing: -0.6px;
}
```
